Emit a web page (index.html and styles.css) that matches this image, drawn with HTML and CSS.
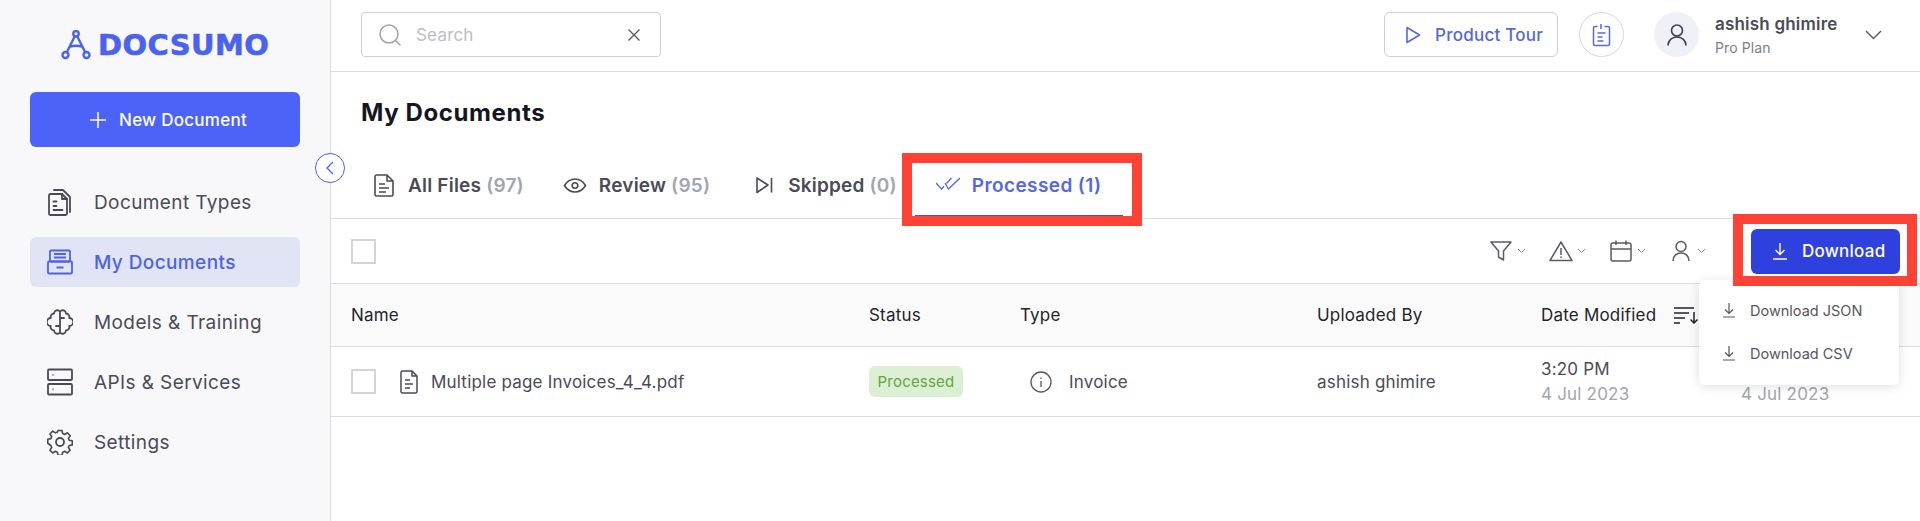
FILE: index.html
```html
<!DOCTYPE html>
<html lang="en">
<head>
    <meta charset="UTF-8">
    <title>Docsumo - My Documents</title>
    <link rel="stylesheet" href="styles.css">
</head>
<body>
    <div class="app">
        <aside class="sidebar">
            <div class="logo">
                <svg class="logo-mark" width="30" height="30" viewBox="0 0 30 30" fill="none" stroke="#4a62f0" stroke-width="2.4">
                    <circle cx="15" cy="3.800" r="2.700"/>
                    <circle cx="4.500" cy="25" r="3"/>
                    <circle cx="25.500" cy="25" r="3"/>
                    <path d="M13.800 6.300 5.800 22.300M16.200 6.300l8 16M8.500 17q6.500-2.500 13 0"/>
                </svg>
                <span class="logo-text">DOCSUMO</span>
            </div>
            <button class="new-doc">
                <svg width="16" height="16" viewBox="0 0 16 16" fill="none" stroke="#fff" stroke-width="1.500"><path d="M8 0v16M0 8h16"/></svg>
                New Document
            </button>
            <nav class="nav">
                <a class="nav-item">
                    <svg width="26" height="28" viewBox="0 0 26 28" fill="none" stroke="#4a4a55" stroke-width="1.800" stroke-linejoin="round" stroke-linecap="round">
                        <path d="M2 7.500c0-.8.600-1.500 1.500-1.500H15l5 5v14.500c0 .8-.7 1.500-1.500 1.500h-15C2.600 27 2 26.300 2 25.500z"/>
                        <path d="M7 2h9l7 7v15M15 6v5h5M6.500 13.500h3M6.500 18h3M6.500 22h9"/>
                    </svg>
                    Document Types
                </a>
                <a class="nav-item active">
                    <svg width="26" height="26" viewBox="0 0 26 26" fill="none" stroke="#4f62e6" stroke-width="1.800" stroke-linejoin="round">
                        <rect x="3" y="1.500" width="20" height="11" rx="1"/>
                        <rect x="1" y="12.500" width="24" height="12" rx="1"/>
                        <path d="M7 5h12M7 8.500h12M9.500 18.500h7"/>
                    </svg>
                    My Documents
                </a>
                <a class="nav-item">
                    <svg width="26" height="28" viewBox="0 0 26 28" fill="none" stroke="#4a4a55" stroke-width="1.800" stroke-linejoin="round" stroke-linecap="round">
                        <path d="M13 3.500A3.400 3.400 0 0 0 7 5.500 3.400 3.400 0 0 0 3.800 10 4 4 0 0 0 3.800 18 3.400 3.400 0 0 0 7 22.500 3.400 3.400 0 0 0 13 24.500 3.400 3.400 0 0 0 19 22.500 3.400 3.400 0 0 0 22.200 18 4 4 0 0 0 22.200 10 3.400 3.400 0 0 0 19 5.500 3.400 3.400 0 0 0 13 3.500zM13 3.500v21M13 10h4M13 18H9"/>
                    </svg>
                    Models &amp; Training
                </a>
                <a class="nav-item">
                    <svg width="26" height="28" viewBox="0 0 26 28" fill="none" stroke="#4a4a55" stroke-width="1.800">
                        <rect x="1" y="1.500" width="24" height="10.500" rx="1"/>
                        <rect x="1" y="16" width="24" height="10.500" rx="1"/>
                        <path d="M5.500 6.800h1M5.500 21.300h1"/>
                    </svg>
                    APIs &amp; Services
                </a>
                <a class="nav-item">
                    <svg width="26" height="26" viewBox="0 0 26 26" fill="none" stroke="#4a4a55" stroke-width="1.800" stroke-linejoin="round">
                        <circle cx="13" cy="13" r="4"/>
                        <path d="M10.800 1h4.400l.7 3.400 2.200 1 3-1.900 3 3.200-1.900 2.900.9 2.100 3.400.7v4.400l-3.400.7-.9 2.100 1.900 2.900-3 3.200-3-1.900-2.200 1-.7 3.400h-4.400l-.7-3.400-2.200-1-3 1.900-3-3.200 1.900-2.900-.9-2.100L-.5 15v-4.400l3.400-.7.900-2.100L2 4.900l3-3.200 3 1.900 2.200-1z" transform="translate(1.200 .6) scale(.91)"/>
                    </svg>
                    Settings
                </a>
            </nav>
            <button class="collapse">
                <svg width="10" height="14" viewBox="0 0 10 14" fill="none" stroke="#4f62e6" stroke-width="1.300"><path d="M8 1 2 7l6 6"/></svg>
            </button>
        </aside>

        <main class="main">
            <header class="topbar">
                <div class="search">
                    <svg width="22" height="22" viewBox="0 0 22 22" fill="none" stroke="#a3a3a8" stroke-width="1.500"><circle cx="10" cy="10" r="9"/><path d="m16.500 16.500 5 5"/></svg>
                    <span class="search-text">Search</span>
                    <svg class="search-clear" width="12" height="12" viewBox="0 0 12 12" fill="none" stroke="#55565f" stroke-width="1.300"><path d="m.5.500 11 11M11.500.5l-11 11"/></svg>
                </div>
                <button class="tour">
                    <svg width="16" height="18" viewBox="0 0 16 18" fill="none" stroke="#5468e0" stroke-width="1.600" stroke-linejoin="round"><path d="M2 1.500 14.500 9 2 16.500z"/></svg>
                    Product Tour
                </button>
                <div class="round-btn">
                    <svg width="19" height="24" viewBox="0 0 18 24" fill="none" stroke="#5468e0" stroke-width="1.500" stroke-linejoin="round"><path d="M5 3.500H2.500c-.8 0-1.500.7-1.500 1.500v16c0 .8.700 1.500 1.500 1.500h13c.8 0 1.500-.7 1.500-1.500V5c0-.8-.7-1.500-1.500-1.500H12M8.500 1v5M5 10h8M5 14h5M5 18h6"/></svg>
                </div>
                <div class="avatar">
                    <svg width="20" height="22" viewBox="0 0 20 22" fill="none" stroke="#3f4049" stroke-width="1.600"><circle cx="10" cy="6.500" r="5.500"/><path d="M1 21.500c0-5 4-8.500 9-8.500s9 3.500 9 8.500"/></svg>
                </div>
                <div class="user">
                    <div class="user-name">ashish ghimire</div>
                    <div class="user-plan">Pro Plan</div>
                </div>
                <svg class="user-caret" width="17" height="10" viewBox="0 0 17 10" fill="none" stroke="#55565f" stroke-width="1.400"><path d="m1 1 7.500 7.500L16 1"/></svg>
            </header>

            <h1 class="page-title">My Documents</h1>

            <div class="tabs">
                <div class="tab">
                    <svg width="24" height="24" viewBox="0 0 24 24" fill="none" stroke="#4a4a55" stroke-width="1.600" stroke-linejoin="round"><path d="M3 3.500c0-.8.600-1.500 1.500-1.500H15l6 6v13.500c0 .8-.7 1.500-1.500 1.500h-15C3.600 23 3 22.300 3 21.500zM15 2v6h6M7 11h6M7 15h10M7 19h7"/></svg>
                    <span>All Files <em>(97)</em></span>
                </div>
                <div class="tab tab-review">
                    <svg width="24" height="24" viewBox="0 0 24 24" fill="none" stroke="#4a4a55" stroke-width="1.600"><path d="M1.500 12.500C4 8.300 7.500 6 12 6s8 2.300 10.500 6.500C20 16.700 16.500 19 12 19s-8-2.300-10.500-6.500z"/><circle cx="12" cy="12.500" r="2.800"/></svg>
                    <span>Review <em>(95)</em></span>
                </div>
                <div class="tab">
                    <svg width="24" height="24" viewBox="0 0 24 24" fill="none" stroke="#4a4a55" stroke-width="1.600" stroke-linejoin="round"><path d="M5 5v14.500L16 12zM19.500 5v14.500"/></svg>
                    <span>Skipped <em>(0)</em></span>
                </div>
                <div class="tab selected">
                    <svg width="24" height="24" viewBox="0 0 24 24" fill="none" stroke="#5468e0" stroke-width="1.300"><path d="m0 10 5.500 6L8 13.200M10.500 10.500 15.500 5M9 10l3.500 6L24 5"/></svg>
                    <span>Processed (1)</span>
                    <div class="mark mark-tab"></div>
                </div>
            </div>

            <div class="toolbar">
                <div class="checkbox"></div>
                <div class="filters">
                    <div class="filter">
                        <svg width="24" height="22" viewBox="0 0 24 22" fill="none" stroke="#5a5b64" stroke-width="1.500" stroke-linejoin="round"><path d="M2 2h20l-7.500 9v9l-5-3v-6z"/></svg>
                        <svg class="caret" width="9" height="6" viewBox="0 0 9 6" fill="none" stroke="#8a8b93" stroke-width="1"><path d="m1 1 3.500 3.500L8 1"/></svg>
                    </div>
                    <div class="filter">
                        <svg width="24" height="22" viewBox="0 0 24 22" fill="none" stroke="#5a5b64" stroke-width="1.500" stroke-linejoin="round"><path d="M12 2 23 20.500H1zM12 8v7M12 16.500v1.500"/></svg>
                        <svg class="caret" width="9" height="6" viewBox="0 0 9 6" fill="none" stroke="#8a8b93" stroke-width="1"><path d="m1 1 3.500 3.500L8 1"/></svg>
                    </div>
                    <div class="filter">
                        <svg width="24" height="22" viewBox="0 0 24 22" fill="none" stroke="#5a5b64" stroke-width="1.500" stroke-linejoin="round"><rect x="2" y="3" width="20" height="18" rx="2"/><path d="M2 9h20M7 .5V5M17 .5V5"/></svg>
                        <svg class="caret" width="9" height="6" viewBox="0 0 9 6" fill="none" stroke="#8a8b93" stroke-width="1"><path d="m1 1 3.500 3.500L8 1"/></svg>
                    </div>
                    <div class="filter">
                        <svg width="24" height="22" viewBox="0 0 24 22" fill="none" stroke="#5a5b64" stroke-width="1.500"><circle cx="12" cy="6.500" r="5"/><path d="M4 21c0-5 3.500-8 8-8s8 3 8 8"/></svg>
                        <svg class="caret" width="9" height="6" viewBox="0 0 9 6" fill="none" stroke="#8a8b93" stroke-width="1"><path d="m1 1 3.500 3.500L8 1"/></svg>
                    </div>
                </div>
                <div class="download-wrap">
                    <button class="download">
                        <svg width="16" height="18" viewBox="0 0 16 18" fill="none" stroke="#fff" stroke-width="1.400"><path d="M8 1v11M3.500 8 8 12.500 12.500 8M1 17h14"/></svg>
                        Download
                    </button>
                    <div class="mark mark-download"></div>
                    <div class="menu">
                        <div class="menu-item">
                            <svg width="14" height="16" viewBox="0 0 14 16" fill="none" stroke="#55565f" stroke-width="1.200"><path d="M7 1v10M3 7.500 7 11.500 11 7.500M1 15h12"/></svg>
                            Download JSON
                        </div>
                        <div class="menu-item">
                            <svg width="14" height="16" viewBox="0 0 14 16" fill="none" stroke="#55565f" stroke-width="1.200"><path d="M7 1v10M3 7.500 7 11.500 11 7.500M1 15h12"/></svg>
                            Download CSV
                        </div>
                    </div>
                </div>
            </div>

            <div class="table-row table-head">
                <div>Name</div>
                <div>Status</div>
                <div>Type</div>
                <div>Uploaded By</div>
                <div class="date-head">
                    Date Modified
                    <svg width="26" height="18" viewBox="0 0 26 18" fill="none" stroke="#23242c" stroke-width="1.500"><path d="M1 2h20M1 7h15M1 12h11M1 17h6M21 6v11M17.500 13.500 21 17l3.500-3.500"/></svg>
                </div>
                <div></div>
            </div>

            <div class="table-row table-body">
                <div class="name-cell">
                    <div class="checkbox"></div>
                    <svg width="20" height="24" viewBox="0 0 20 24" fill="none" stroke="#4a4a55" stroke-width="1.500" stroke-linejoin="round"><path d="M2 2.500C2 1.700 2.600 1 3.500 1H13l5 5v15.500c0 .8-.7 1.500-1.500 1.500h-13C2.600 23 2 22.300 2 21.500zM13 1v5h5M6 10h5M6 14h8M6 18h5"/></svg>
                    Multiple page Invoices_4_4.pdf
                </div>
                <div><span class="badge">Processed</span></div>
                <div class="type-cell">
                    <svg width="22" height="22" viewBox="0 0 22 22" fill="none" stroke="#55565f" stroke-width="1.300"><circle cx="11" cy="11" r="10"/><path d="M11 10v6M11 6.500V8"/></svg>
                    Invoice
                </div>
                <div>ashish ghimire</div>
                <div class="date-cell"><div>3:20 PM</div><div class="date-sub">4 Jul 2023</div></div>
                <div class="date-cell"><div>&nbsp;</div><div class="date-sub">4 Jul 2023</div></div>
            </div>
        </main>
    </div>
</body>
</html>
```

FILE: styles.css
```css
* {
    box-sizing: border-box;
}
body {
    margin: 0;
    height: 521px;
    overflow: hidden;
    background: white;
    font-family: Inter, "Liberation Sans", sans-serif;
    color: #4a4b57;
}
button {
    font-family: inherit;
    border: none;
    cursor: pointer;
}
.app {
    display: flex;
    height: 521px;
}

/* sidebar */
.sidebar {
    position: relative;
    flex: 0 0 331px;
    padding: 30px 30px 0;
    background: #f8f8fb;
    border-right: 1px solid #dcdce0;
}
.logo {
    display: flex;
    align-items: center;
    gap: 7px;
    height: 30px;
    padding-left: 31px;
}
.logo-text {
    font-family: "DejaVu Sans", sans-serif;
    font-size: 29px;
    font-weight: 700;
    letter-spacing: 0.4px;
    color: #4a62f0;
    -webkit-text-stroke: 0.6px #4a62f0;
}
.new-doc {
    display: flex;
    align-items: center;
    justify-content: center;
    gap: 13px;
    width: 270px;
    height: 55px;
    margin-top: 32px;
    padding-left: 13px;
    border-radius: 6px;
    background: #4c63f9;
    color: white;
    font-size: 17px;
    font-weight: 500;
    letter-spacing: 0.25px;
}
.nav {
    margin-top: 30px;
}
.nav-item {
    display: flex;
    align-items: center;
    gap: 21px;
    height: 50px;
    margin-bottom: 10px;
    padding-left: 17px;
    border-radius: 6px;
    font-size: 19px;
    letter-spacing: 0.4px;
}
.nav-item.active {
    background: #e0e4f5;
    color: #4f62e6;
    font-weight: 500;
}
.collapse {
    position: absolute;
    top: 153px;
    left: 315px;
    display: flex;
    align-items: center;
    justify-content: center;
    width: 30px;
    height: 30px;
    padding: 0;
    border: 1px solid #4f62e6;
    border-radius: 50%;
    background: white;
    z-index: 2;
}

/* top bar */
.main {
    flex: 1;
    min-width: 0;
}
.topbar {
    display: flex;
    align-items: flex-start;
    height: 72px;
    padding: 12px 0 0 30px;
    border-bottom: 1px solid #dcdce0;
}
.search {
    display: flex;
    align-items: center;
    width: 300px;
    height: 45px;
    padding: 0 20px 0 17px;
    border: 1px solid #cfcfd3;
    border-radius: 4px;
}
.search-text {
    margin-left: 15px;
    font-size: 17px;
    letter-spacing: 0.2px;
    color: #bcbdc3;
}
.search-clear {
    margin-left: auto;
}
.tour {
    display: flex;
    align-items: center;
    gap: 14px;
    width: 174px;
    height: 45px;
    margin-left: 723px;
    padding: 0 0 0 20px;
    border: 1px solid #cfcfd3;
    border-radius: 6px;
    background: white;
    color: #5468e0;
    font-size: 17px;
    font-weight: 500;
    letter-spacing: 0.25px;
}
.round-btn {
    display: flex;
    align-items: center;
    justify-content: center;
    width: 45px;
    height: 45px;
    margin-left: 21px;
    border: 1px solid #d6d6da;
    border-radius: 50%;
}
.avatar {
    display: flex;
    align-items: center;
    justify-content: center;
    width: 45px;
    height: 45px;
    margin-left: 30px;
    border-radius: 50%;
    background: #eff1f8;
}
.user {
    margin-left: 16px;
}
.user-name {
    font-size: 17px;
    font-weight: 600;
    letter-spacing: 0.2px;
    line-height: 24px;
}
.user-plan {
    margin-top: 2px;
    font-size: 14px;
    letter-spacing: 0.1px;
    line-height: 20px;
    color: #7d7e86;
}
.user-caret {
    margin: 18px 0 0 28px;
}

/* heading and tabs */
.page-title {
    display: flex;
    align-items: center;
    height: 80px;
    margin: 0;
    padding-left: 30px;
    font-size: 24px;
    font-weight: 700;
    letter-spacing: 0.6px;
    color: #15161e;
}
.tabs {
    display: flex;
    height: 67px;
    padding-left: 20px;
    border-bottom: 1px solid #dcdce0;
}
.tab {
    position: relative;
    display: flex;
    align-items: center;
    gap: 12px;
    padding: 0 21px;
    font-size: 19px;
    font-weight: 600;
    letter-spacing: 0.2px;
}
.tab em {
    font-style: normal;
    color: #a0a6b0;
}
.tab-review {
    margin-left: -3px;
}
.tab.selected {
    margin-left: -3px;
    letter-spacing: 0.4px;
    color: #5468e0;
}
.tab.selected::after {
    content: "";
    position: absolute;
    left: 0;
    right: 0;
    bottom: 1px;
    height: 2px;
    background: #3f55d8;
}

/* red boxes drawn over the screenshot */
.mark {
    position: absolute;
    border: 10px solid #ff4136;
    z-index: 3;
}
.mark-tab {
    top: 1px;
    left: -13px;
    right: -19px;
    bottom: -8px;
}
.mark-download {
    top: -15px;
    left: -18px;
    right: -17px;
    bottom: -12px;
}

/* toolbar */
.toolbar {
    display: flex;
    align-items: center;
    height: 65px;
    padding: 0 20px;
    border-bottom: 1px solid #dcdce0;
}
.checkbox {
    flex: none;
    width: 25px;
    height: 25px;
    border: 2px solid #d4d4d8;
    background: white;
}
.filters {
    display: flex;
    margin-left: auto;
}
.filter {
    display: flex;
    align-items: center;
    gap: 4px;
    width: 60px;
}
.download-wrap {
    position: relative;
    margin-left: 22px;
}
.download {
    display: flex;
    align-items: center;
    gap: 14px;
    width: 149px;
    height: 45px;
    padding-left: 21px;
    border-radius: 6px;
    background: #2e40dd;
    color: white;
    font-size: 17px;
    font-weight: 500;
    letter-spacing: 0.25px;
}
.menu {
    position: absolute;
    top: 51px;
    right: 1px;
    width: 200px;
    height: 105px;
    padding-top: 9px;
    border-radius: 6px;
    background: white;
    box-shadow: 0 2px 12px rgba(0, 0, 0, 0.12);
    z-index: 2;
}
.menu-item {
    display: flex;
    align-items: center;
    gap: 14px;
    height: 43px;
    padding-left: 23px;
    font-size: 14.5px;
    color: #55565f;
}

/* table */
.table-row {
    display: grid;
    grid-template-columns: 518px 151px 297px 224px 200px 1fr;
    align-items: center;
    padding-left: 20px;
    border-bottom: 1px solid #dcdce0;
    font-size: 17px;
    letter-spacing: 0.2px;
}
.table-head {
    height: 63px;
    background: #fafafa;
    color: #23242c;
}
.date-head {
    display: flex;
    align-items: center;
    gap: 17px;
}
.table-body {
    height: 70px;
}
.name-cell {
    display: flex;
    align-items: center;
    gap: 12px;
}
.name-cell svg {
    margin-left: 11px;
}
.badge {
    display: inline-block;
    width: 94px;
    height: 31px;
    border-radius: 6px;
    background: #dcefd5;
    color: #5fa83a;
    font-size: 15px;
    line-height: 31px;
    text-align: center;
}
.type-cell {
    display: flex;
    align-items: center;
    gap: 17px;
    padding-left: 10px;
}
.date-sub {
    margin-top: 4px;
    color: #a3a5ad;
}
.date-cell {
    line-height: 21px;
}
```
